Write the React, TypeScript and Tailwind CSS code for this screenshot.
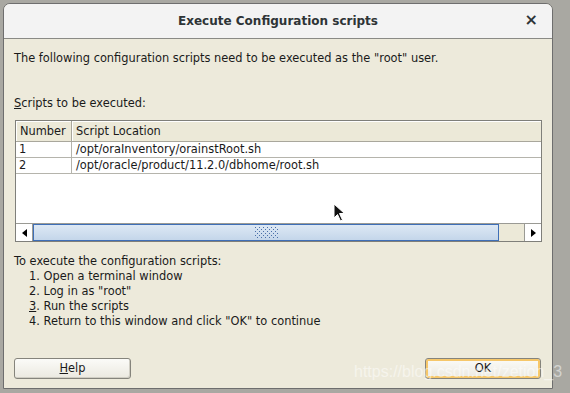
import React from "react"

const font = { fontFamily: '"DejaVu Sans", "Liberation Sans", sans-serif' }

const rows = [
  { n: "1", path: "/opt/oraInventory/orainstRoot.sh" },
  { n: "2", path: "/opt/oracle/product/11.2.0/dbhome/root.sh" },
]

const steps = [
  "Open a terminal window",
  'Log in as "root"',
  "Run the scripts",
  'Return to this window and click "OK" to continue',
]

function Cursor() {
  return (
    <svg className="absolute left-[333px] top-[203px]" width="14" height="20" viewBox="0 0 14 20">
      <path d="M1 1 L1 15 L4.5 11.5 L7.5 18 L9.5 17 L6.5 10.5 L11.5 10.5 Z" fill="#111" stroke="#fff" strokeWidth="1" />
    </svg>
  )
}

export default function App() {
  return (
    <div className="relative h-[393px] w-[570px] overflow-hidden bg-[#a9a8a2] pl-[3px] pt-[3px] text-[11.4px] text-[#1a1a1a]" style={font}>
      <div className="flex h-[386px] w-[550px] flex-col overflow-hidden rounded-t-[7px] border border-[#6e6e6e] bg-[#edeadb]">
        <div className="relative flex h-[35px] shrink-0 items-center justify-center border-b border-[#8a8a85] bg-[#f3f3f3]">
          <span className="text-[12px] font-bold text-[#2e3436]">Execute Configuration scripts</span>
          <span className="absolute right-[14px] top-[8px] text-[16px] font-bold leading-[16px] text-[#2e3436]">×</span>
        </div>

        <div className="flex flex-1 flex-col px-[10px]">
          <p className="mt-[12px] leading-[15px]">The following configuration scripts need to be executed as the "root" user.</p>
          <p className="mt-[30px] leading-[15px]">
            <span className="underline">S</span>cripts to be executed:
          </p>

          <div className="mt-[9px] ml-[1px] flex h-[122px] w-[527px] flex-col border border-[#7f7f7a] bg-white">
            <div className="flex h-[21px] shrink-0 border-b border-[#a9a79c] bg-[#ece9d8]">
              <div className="flex w-[56px] items-center border-r border-[#a9a79c] pl-[4px] pt-[1px] shadow-[inset_1px_1px_0_#fff]">Number</div>
              <div className="flex flex-1 items-center pl-[4px] pt-[1px] shadow-[inset_1px_1px_0_#fff]">Script Location</div>
            </div>
            {rows.map((r) => (
              <div key={r.n} className="flex h-[16px] shrink-0 border-b border-[#b5b4ac]">
                <div className="flex w-[56px] items-center border-r border-[#b5b4ac] pl-[3px]">{r.n}</div>
                <div className="flex flex-1 items-center pl-[4px]">{r.path}</div>
              </div>
            ))}
            <div className="flex-1" />
            <div className="flex h-[18px] shrink-0 border-t border-[#9a9a94]">
              <div className="flex w-[17px] items-center justify-center border-r border-[#9a9a94] bg-white">
                <svg width="5" height="8" viewBox="0 0 5 8"><path d="M5 0 L0 4 L5 8 Z" fill="#000" /></svg>
              </div>
              <div className="flex w-[466px] items-center justify-center border border-[#3f6fb7] bg-[linear-gradient(#dde8f4,#c4d6ea)]">
                <svg width="23" height="12" viewBox="0 0 23 12">
                  {[0, 1, 2, 3, 4, 5].map((row) =>
                    [0, 1, 2, 3, 4, 5].map((col) => (
                      <rect key={row + "-" + col} x={col * 4 + (row % 2) * 2} y={row * 2} width="1" height="1" fill="#4a6fa8" />
                    ))
                  )}
                </svg>
              </div>
              <div className="flex-1 bg-[#ece9d8]" />
              <div className="flex w-[17px] items-center justify-center border-l border-[#9a9a94] bg-white">
                <svg width="5" height="8" viewBox="0 0 5 8"><path d="M0 0 L5 4 L0 8 Z" fill="#000" /></svg>
              </div>
            </div>
          </div>

          <p className="mt-[12px] leading-[15px]">To execute the configuration scripts:</p>
          <ol className="flex flex-col pl-[15px]">
            {steps.map((s, i) => (
              <li key={s} className="leading-[15px]">
                {i === 2 ? <span className="underline">3</span> : i + 1}. {s}
              </li>
            ))}
          </ol>

          <div className="mt-[29px] flex justify-between">
            <button className="h-[21px] w-[117px] rounded-[3px] border border-[#85847c] bg-[linear-gradient(#fbfbf8,#ebe9e0)] text-[11.4px] shadow-[inset_-1px_-1px_0_#d0cec4]">
              <span className="underline">H</span>elp
            </button>
            <button className="mr-[1px] h-[21px] w-[116px] rounded-[3px] border border-[#85847c] bg-[linear-gradient(#fbfbf8,#ebe9e0)] text-[11.4px] shadow-[inset_0_0_0_2px_#f6c76a]">
              OK
            </button>
          </div>
        </div>
      </div>
      <Cursor />
      <span className="pointer-events-none absolute left-[354px] top-[363px] text-[16px] leading-[18px] text-white/50" style={{ fontFamily: '"Liberation Sans", Arial, sans-serif' }}>
        https://blog.csdn.net/zetion_3
      </span>
    </div>
  )
}
